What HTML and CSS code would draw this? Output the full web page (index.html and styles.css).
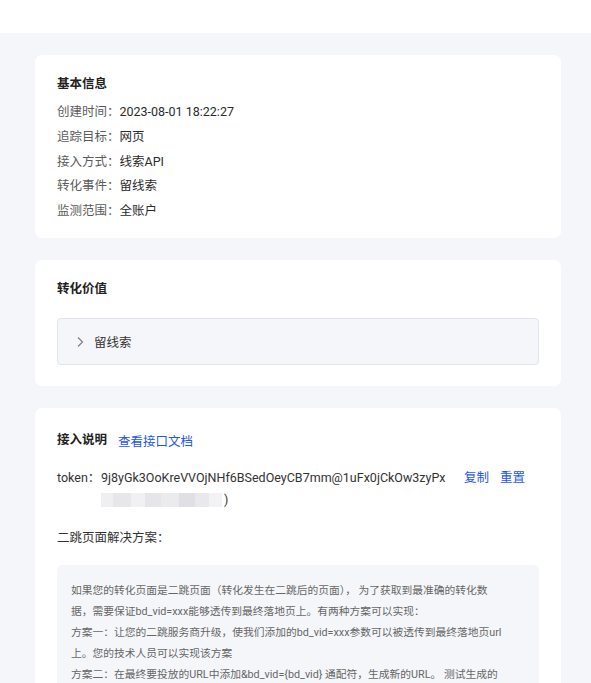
FILE: index.html
```html
<!DOCTYPE html>
<html lang="zh-CN">
<head>
<meta charset="utf-8">
<title>转化详情</title>
<link rel="stylesheet" href="styles.css">
</head>
<body>
<header class="topbar"></header>
<main class="page">
  <section class="card card-info">
    <h2 class="card-title">基本信息</h2>
    <ul class="info-list">
      <li><span class="label">创建时间：</span><span class="value">2023-08-01 18:22:27</span></li>
      <li><span class="label">追踪目标：</span><span class="value">网页</span></li>
      <li><span class="label">接入方式：</span><span class="value">线索API</span></li>
      <li><span class="label">转化事件：</span><span class="value">留线索</span></li>
      <li><span class="label">监测范围：</span><span class="value">全账户</span></li>
    </ul>
  </section>

  <section class="card card-value">
    <h2 class="card-title">转化价值</h2>
    <div class="collapse">
      <svg class="chevron" width="8" height="12" viewBox="0 0 8 12"><polyline points="2,1.5 6.5,6 2,10.5" fill="none" stroke="#7a7f8c" stroke-width="1.2"/></svg>
      <span class="collapse-text">留线索</span>
    </div>
  </section>

  <section class="card card-api">
    <div class="title-row">
      <h2 class="card-title">接入说明</h2>
      <a class="link doc-link" href="#">查看接口文档</a>
    </div>
    <div class="token-row">
      <span class="token-label">token：</span>
      <div class="token-value">
        <div class="token-line">9j8yGk3OoKreVVOjNHf6BSedOeyCB7mm@1uFx0jCkOw3zyPx</div>
        <div class="token-line"><span class="mosaic"><i class="m1"></i><i class="m2"></i><i class="m3"></i><i class="m4"></i><i class="m5"></i><i class="m6"></i><i class="m7"></i><i class="m8"></i></span>)</div>
      </div>
      <div class="token-actions">
        <a class="link" href="#">复制</a>
        <a class="link" href="#">重置</a>
      </div>
    </div>
    <p class="sub-title">二跳页面解决方案：</p>
    <div class="tip-box">
      <p>如果您的转化页面是二跳页面（转化发生在二跳后的页面）， 为了获取到最准确的转化数<br>据，需要保证bd_vid=xxx能够透传到最终落地页上。有两种方案可以实现：<br>方案一：让您的二跳服务商升级，使我们添加的bd_vid=xxx参数可以被透传到最终落地页url<br>上。您的技术人员可以实现该方案<br>方案二：在最终要投放的URL中添加&amp;bd_vid={bd_vid} 通配符，生成新的URL。 测试生成的<br>URL的bd_vid能否透传到最终落地页上， 若可以透传到最终落地页， 则使用此URL进行投放。</p>
    </div>
  </section>
</main>
</body>
</html>
```

FILE: styles.css
```css
* { box-sizing: border-box; }
html, body { margin: 0; padding: 0; }
body {
  background: #f5f6fa;
  font-family: Roboto, "Noto Sans CJK SC", sans-serif;
  color: #333;
  overflow: hidden;
}
.topbar {
  height: 33px;
  background: #fff;
}
.page {
  padding: 22px 30px 0 35px;
}
.card {
  background: #fff;
  border-radius: 7px;
  padding: 0 22px;
  margin-bottom: 22px;
}
.card-info { height: 183px; padding-top: 19px; }
.card-value { height: 126px; padding-top: 19px; }
.card-api { padding-top: 22px; padding-bottom: 20px; }
.card-title {
  margin: 0;
  font-size: 12.5px;
  line-height: 20px;
  font-weight: 700;
  color: #222;
}
.info-list {
  list-style: none;
  margin: 6px 0 0;
  padding: 0;
  font-size: 12.5px;
  line-height: 24.75px;
}
.label { color: #5c5c5c; }
.value { color: #2b2b2b; }
.collapse {
  margin-top: 19px;
  height: 47px;
  background: #f5f6fa;
  border: 1px solid #e1e5ee;
  border-radius: 4px;
  display: flex;
  align-items: center;
  padding-left: 18px;
}
.chevron { display: block; margin-right: 10px; }
.collapse-text { font-size: 12.5px; color: #333; }
.title-row {
  display: flex;
  align-items: center;
  gap: 11px;
}
.link {
  color: #1f56f0;
  text-decoration: none;
  font-size: 12.5px;
}
.token-row {
  display: flex;
  margin-top: 17px;
  font-size: 12.5px;
  line-height: 22px;
}
.token-label { width: 44px; color: #333; flex: none; }
.token-value { width: 343px; flex: none; color: #333; }
.token-line { white-space: nowrap; }
.token-actions {
  margin-left: 20px;
  display: flex;
  gap: 11px;
}
.mosaic {
  display: inline-flex;
  vertical-align: middle;
  height: 14px;
  margin-right: 2px;
  margin-top: -2px;
  filter: blur(0.6px);
}
.mosaic i { display: block; height: 100%; }
.m1 { width: 12px; background: #efeff1; }
.m2 { width: 18px; background: #e7e7ea; }
.m3 { width: 14px; background: #f1f1f3; }
.m4 { width: 16px; background: #e6e5ea; }
.m5 { width: 18px; background: #ebebee; }
.m6 { width: 16px; background: #e0dfe5; }
.m7 { width: 14px; background: #e9e9ed; }
.m8 { width: 13px; background: #f2f2f4; }
.sub-title {
  margin: 16px 0 0;
  font-size: 12.5px;
  line-height: 22px;
  color: #333;
}
.tip-box {
  margin-top: 16px;
  background: #f5f6fa;
  border-radius: 5px;
  padding: 16px 14px 15px;
}
.tip-box p {
  margin: 0;
  font-size: 10.75px;
  line-height: 20.9px;
  color: #666;
  white-space: nowrap;
}
```
